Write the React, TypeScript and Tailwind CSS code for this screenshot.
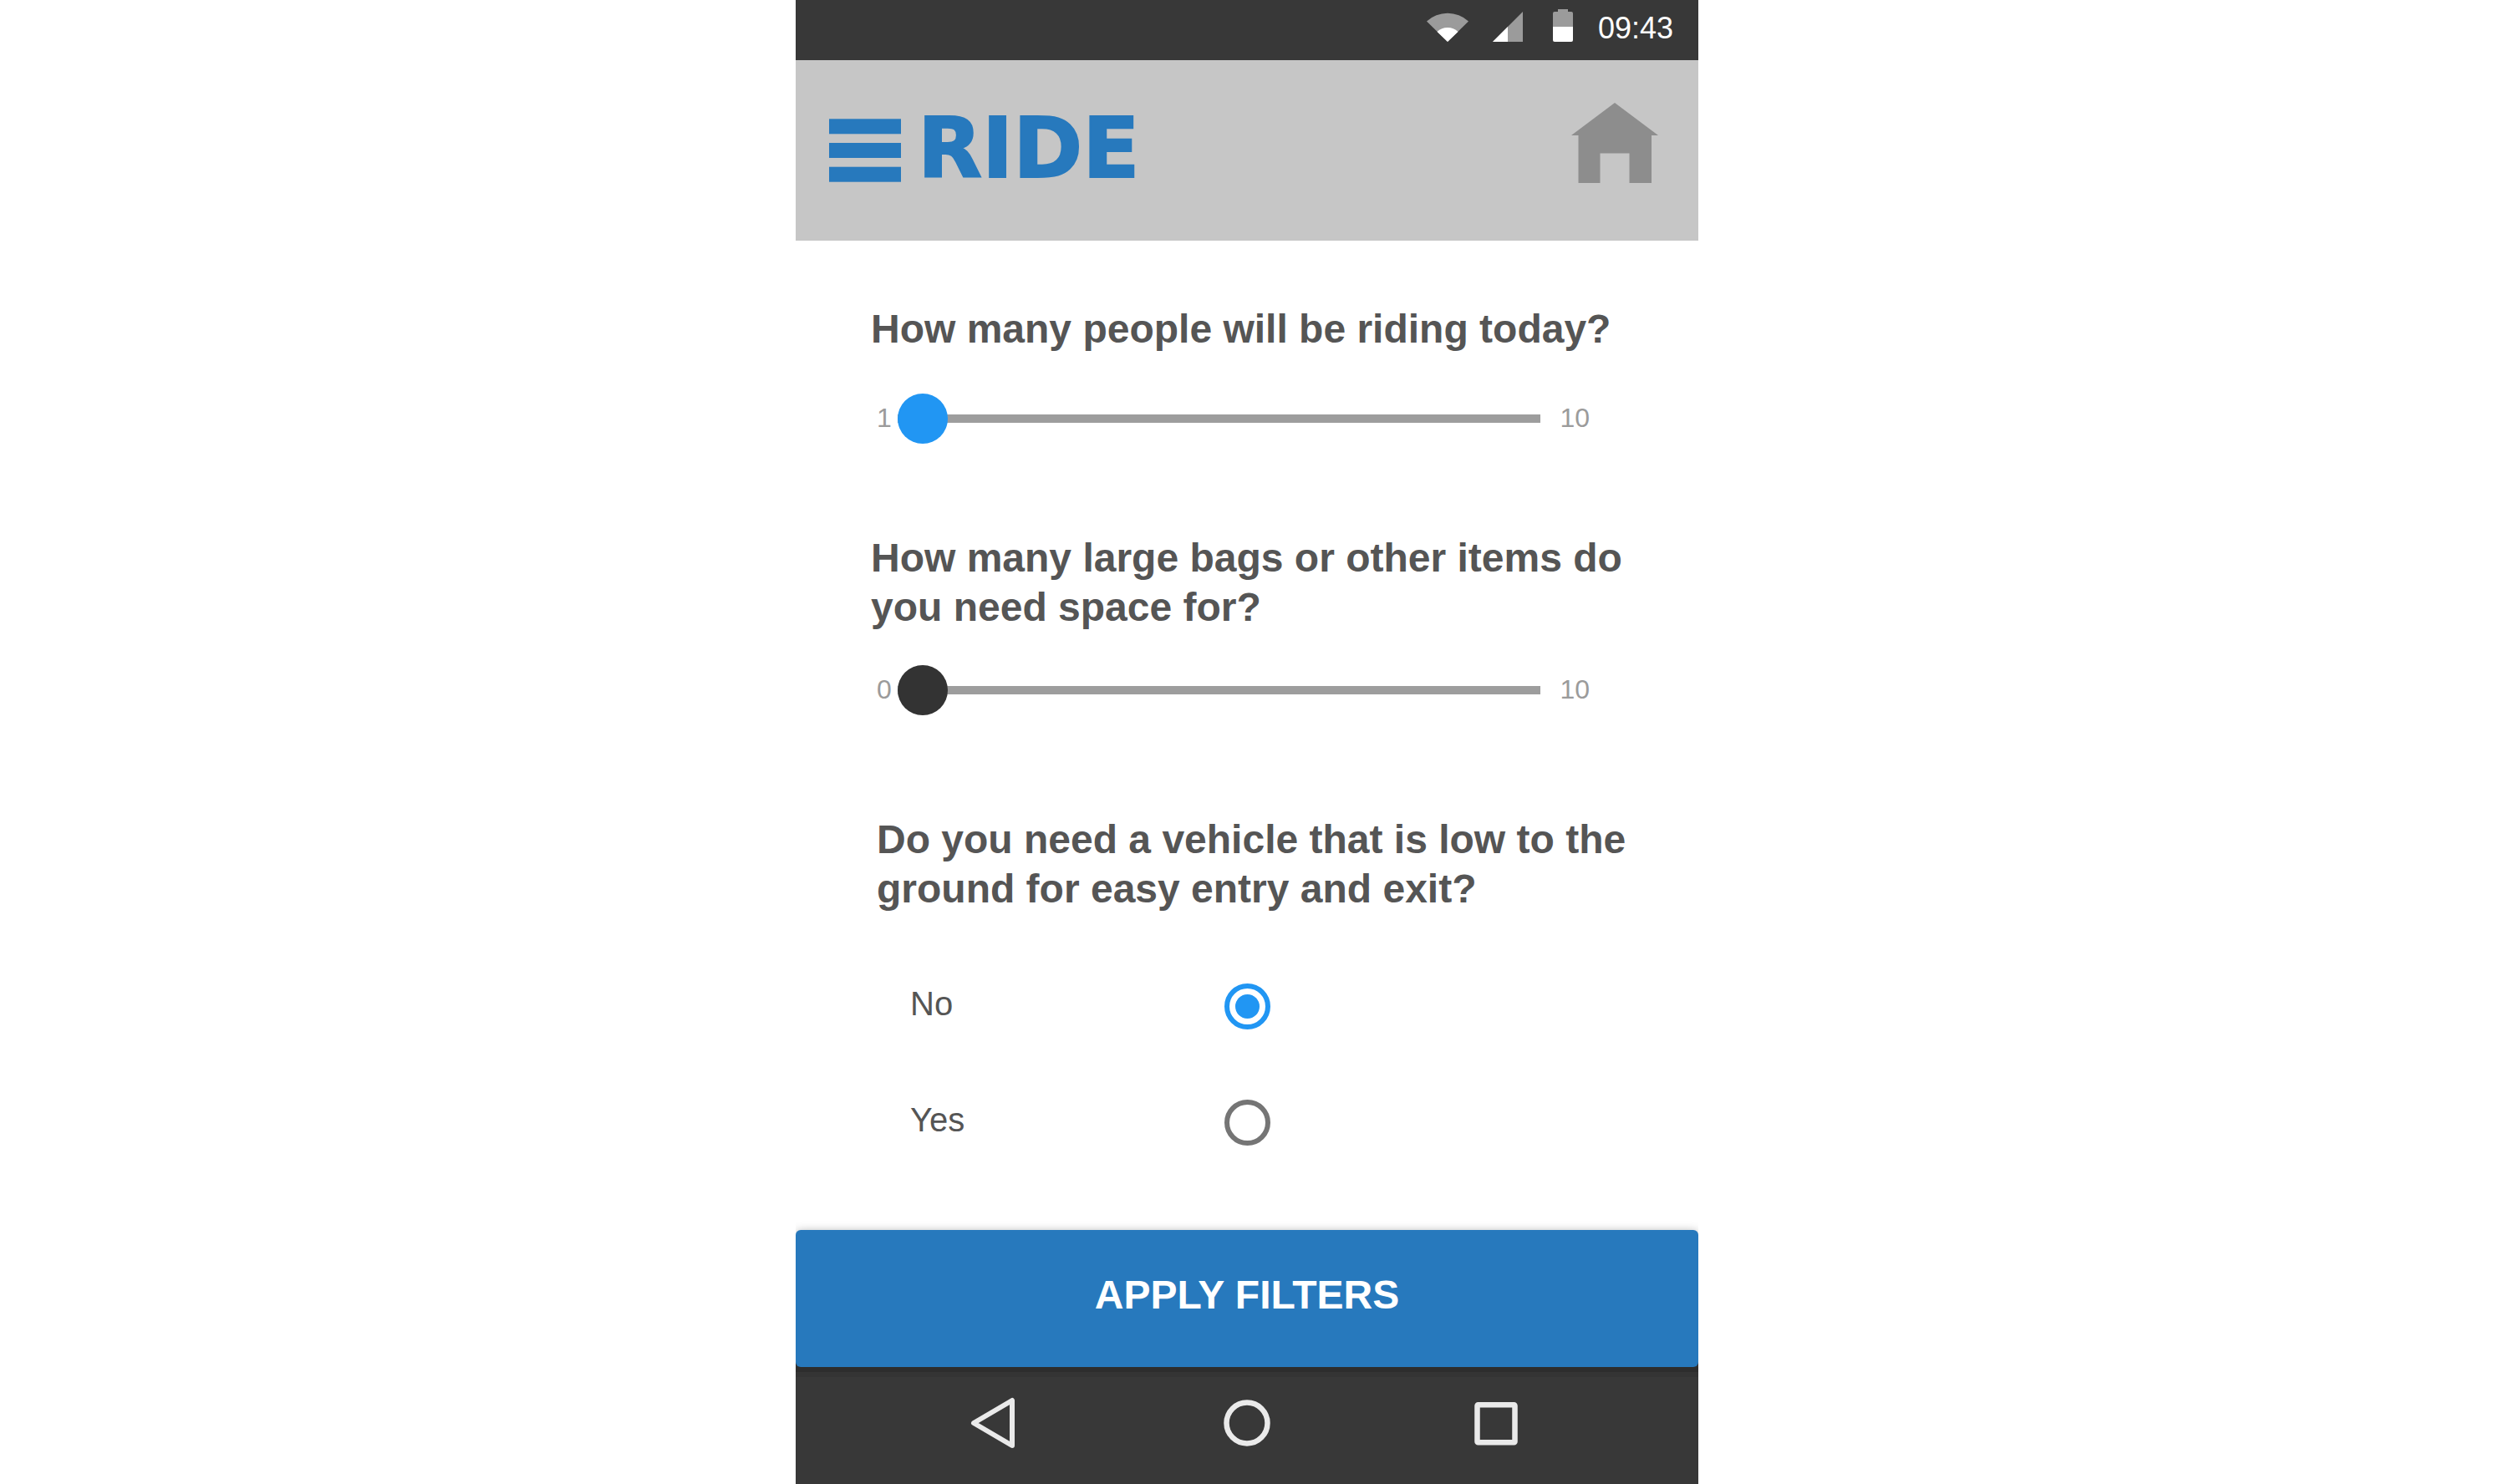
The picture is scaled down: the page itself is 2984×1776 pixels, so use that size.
import { useState } from "react";

function WifiIcon() {
  return (
    <svg className="h-9 w-[50px]" viewBox="0 0 50 36" aria-hidden="true">
      <path d="M0 11.5A37 37 0 0 1 50 11.5L25 36Z" fill="#9b9b9b" />
      <path d="M12.5 24A18 18 0 0 1 37.5 24L25 36Z" fill="#fff" />
    </svg>
  );
}

function SignalIcon() {
  return (
    <svg className="h-9 w-9" viewBox="0 0 36 36" aria-hidden="true">
      <path d="M36 0V36H0Z" fill="#9b9b9b" />
      <path d="M18 18V36H0Z" fill="#fff" />
    </svg>
  );
}

function BatteryIcon() {
  return (
    <svg className="h-[39px] w-6" viewBox="0 0 24 39" aria-hidden="true">
      <path d="M6 0H18V3H22A2 2 0 0 1 24 5V21H0V5A2 2 0 0 1 2 3H6Z" fill="#9b9b9b" />
      <path d="M0 21H24V37A2 2 0 0 1 22 39H2A2 2 0 0 1 0 37Z" fill="#fff" />
    </svg>
  );
}

function MenuIcon() {
  return (
    <svg className="h-[76px] w-[86px]" viewBox="0 0 86 76" fill="#2779bd" aria-hidden="true">
      <rect y="0.3" width="86" height="18" />
      <rect y="29" width="86" height="18" />
      <rect y="57.7" width="86" height="18" />
    </svg>
  );
}

function HomeIcon() {
  return (
    <svg className="h-24 w-[104px]" viewBox="0 0 104 96" aria-hidden="true">
      <path d="M52 0L104 39H96V96H69.5V60.5H34.5V96H8.5V39H0Z" fill="#8d8d8d" />
    </svg>
  );
}

type SliderProps = {
  id: string;
  label: string;
  min: number;
  value: number;
  onChange: (value: number) => void;
  thumb: string;
};

function SliderQuestion({ id, label, min, value, onChange, thumb }: SliderProps) {
  return (
    <>
      <label htmlFor={id} className="block text-[48px] leading-[59px] font-bold">
        {label}
      </label>
      <div className="mr-[50px] flex h-[60px] items-center pl-[7px] text-[32px] leading-8 text-[#9b9b9b]">
        <span className="w-[25px] pb-0.5">{min}</span>
        <input
          id={id}
          type="range"
          min={min}
          max={10}
          value={value}
          onChange={(e) => onChange(Number(e.target.value))}
          className={
            "h-[60px] min-w-0 flex-1 cursor-pointer appearance-none bg-transparent [&::-webkit-slider-runnable-track]:h-2.5 [&::-webkit-slider-runnable-track]:bg-[#9d9d9d] [&::-webkit-slider-thumb]:-mt-[25px] [&::-webkit-slider-thumb]:size-[60px] [&::-webkit-slider-thumb]:appearance-none [&::-webkit-slider-thumb]:rounded-full " +
            thumb
          }
        />
        <span className="pb-0.5 pl-[23px]">10</span>
      </div>
    </>
  );
}

export default function App() {
  const [people, setPeople] = useState(1);
  const [bags, setBags] = useState(0);
  const [low, setLow] = useState("No");

  return (
    <div className="min-h-screen bg-white font-['Liberation_Sans',Arial,sans-serif] text-[#555]">
      <div className="mx-auto flex min-h-screen w-full max-w-[1080px] flex-col overflow-hidden">
        <div className="flex h-[72px] items-end justify-end bg-[#383838] pr-[30px] pb-[22px] text-white">
          <WifiIcon />
          <span className="pl-[29px]"><SignalIcon /></span>
          <span className="pl-9"><BatteryIcon /></span>
          <time className="pl-[30px] text-[36px] leading-8">09:43</time>
        </div>

        <header className="flex h-[216px] items-center justify-between bg-[#c6c6c6] pr-12 pb-1 pl-10">
          <div className="flex items-center gap-5 pt-1">
            <button type="button" aria-label="Menu">
              <MenuIcon />
            </button>
            <h1 className="pb-1 font-['DejaVu_Sans',sans-serif] text-[100px] leading-[104px] font-bold text-[#2779bd] [-webkit-text-stroke:2px_#2779bd]">
              RIDE
            </h1>
          </div>
          <a href="#home" aria-label="Home" className="pb-3.5">
            <HomeIcon />
          </a>
        </header>

        <form className="flex flex-1 flex-col" onSubmit={(e) => e.preventDefault()}>
          <div className="flex-1 pt-[76px] pr-20 pb-16 pl-[90px]">
            <div className="flex flex-col gap-12">
              <SliderQuestion
                id="people"
                label="How many people will be riding today?"
                min={1}
                value={people}
                onChange={setPeople}
                thumb="[&::-webkit-slider-thumb]:bg-[#2196f3]"
              />
            </div>
            <div className="mt-[107px] flex flex-col gap-10">
              <SliderQuestion
                id="bags"
                label="How many large bags or other items do you need space for?"
                min={0}
                value={bags}
                onChange={setBags}
                thumb="[&::-webkit-slider-thumb]:bg-[#333]"
              />
            </div>
            <fieldset className="mt-[119px] pl-[7px]">
              <legend className="text-[48px] leading-[59px] font-bold">
                Do you need a vehicle that is low to the ground for easy entry and exit?
              </legend>
              <div className="flex flex-col gap-[84px] pt-[84px] pl-10">
                {["No", "Yes"].map((option) => (
                  <div key={option} className="flex items-start">
                    <label htmlFor={option} className="w-[376px] text-[40px] leading-[48px]">
                      {option}
                    </label>
                    <input
                      id={option}
                      type="radio"
                      name="low"
                      checked={low === option}
                      onChange={() => setLow(option)}
                      className="grid size-[55px] cursor-pointer appearance-none place-items-center rounded-full border-6 border-[#757575] checked:border-[#2196f3] checked:before:size-[29px] checked:before:rounded-full checked:before:bg-[#2196f3] checked:before:content-['']"
                    />
                  </div>
                ))}
              </div>
            </fieldset>
          </div>
          <div className="bg-linear-to-b from-white from-50% to-[#383838] to-50%">
            <button
              type="submit"
              className="block h-[164px] w-full rounded-md bg-[#2779bd] pb-2 text-[48px] font-bold text-white shadow-[0_2px_12px_rgba(0,0,0,0.35)]"
            >
              APPLY FILTERS
            </button>
          </div>
        </form>

        <nav className="flex h-[140px] items-center justify-center bg-[#383838] pb-1.5 shadow-[inset_0_6px_0_#2d2d2d,inset_0_12px_0_#343434]">
          <button type="button" aria-label="Back" className="flex flex-1 justify-end">
            <svg className="h-16 w-16" viewBox="0 0 64 64" fill="none" stroke="#eaeaea" strokeWidth="6" strokeLinejoin="round" aria-hidden="true">
              <path d="M55 5V59L9 32Z" />
            </svg>
          </button>
          <button type="button" aria-label="Home screen" className="mx-60">
            <svg className="h-16 w-16" viewBox="0 0 64 64" fill="none" stroke="#eaeaea" strokeWidth="6.5" aria-hidden="true">
              <circle cx="32" cy="32" r="24.5" />
            </svg>
          </button>
          <button type="button" aria-label="Recent apps" className="flex flex-1 justify-start">
            <svg className="h-16 w-16" viewBox="0 0 64 64" fill="none" stroke="#eaeaea" strokeWidth="6.5" strokeLinejoin="round" aria-hidden="true">
              <rect x="3.5" y="10.25" width="45" height="45" rx="1" />
            </svg>
          </button>
        </nav>
      </div>
    </div>
  );
}
